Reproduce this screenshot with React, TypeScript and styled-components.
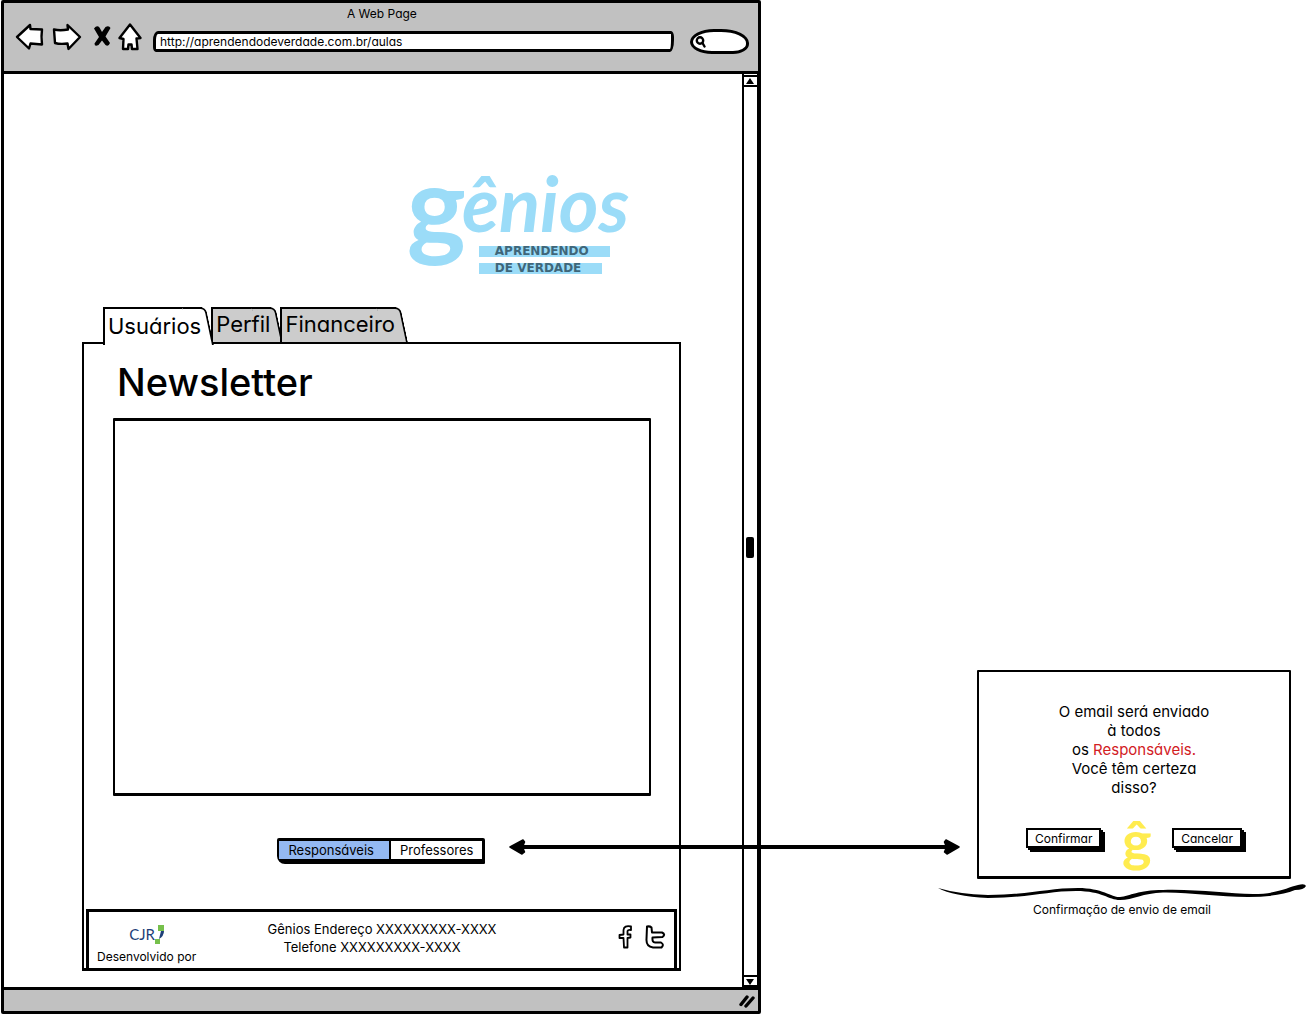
import React, { useState } from "react";
import styled, { createGlobalStyle } from "styled-components";

const ink = "#000";
const chrome = "#c1c1c1";
const sky = "#9bdcf8";
const sans = '"Inter", "Liberation Sans", sans-serif';

const GlobalStyle = createGlobalStyle`
  *, *::before, *::after { box-sizing: border-box; }
  body {
    margin: 0;
    background: #fff;
    color: ${ink};
    font-family: ${sans};
    font-size: 12px;
    line-height: 18px;
    font-feature-settings: "cv11" 1;
  }
  button, input, textarea {
    font: inherit;
    font-feature-settings: inherit;
    color: inherit;
    margin: 0;
  }
  button { cursor: pointer; }
  h1, p { margin: 0; }
`;

const Page = styled.div`
  position: relative;
  display: grid;
  grid-template-columns: minmax(0, 7fr) minmax(0, 5fr);
  align-items: start;
`;

const Browser = styled.section`
  margin: 0 1px;
  border: 3px solid ${ink};
  border-radius: 2px;
`;

const BrowserHeader = styled.header`
  background: ${chrome};
  border-bottom: 3px solid ${ink};
  padding: 2px 9px 17px 11px;
`;

const BrowserTitle = styled.div`
  text-align: center;
`;

const Toolbar = styled.div`
  display: flex;
  align-items: flex-start;
  gap: 16px;
`;

const NavButtons = styled.nav`
  display: flex;
  gap: 7px;
`;

const IconButton = styled.button`
  display: block;
  padding: 0;
  border: 0;
  background: none;
  svg { display: block; }
`;

const AddressField = styled.input`
  flex: 1;
  min-width: 0;
  height: 21px;
  margin: 8px 0 0 -5px;
  padding: 0 4px;
  border: 3px solid ${ink};
  border-radius: 5px 3px 4px 3px / 9px 6px 12px 5px;
  background: #fff;
`;

const SearchBox = styled.label`
  display: flex;
  align-items: center;
  width: 59px;
  height: 25px;
  margin-top: 6px;
  padding-left: 2px;
  border: 3px solid ${ink};
  border-radius: 24px 28px 16px 22px / 13px 14px 10px 12px;
  background: #fff;
  svg { flex: none; }
  input {
    width: 30px;
    border: 0;
    padding: 0;
    outline: 0;
    background: none;
  }
`;

const Viewport = styled.div`
  display: flex;
`;

const Content = styled.main`
  flex: 1;
  min-width: 0;
  padding: 71px 61px 16px 78px;
`;

const Scrollbar = styled.div`
  display: flex;
  flex-direction: column;
  justify-content: space-between;
  align-items: center;
  width: 16px;
  padding-top: 1px;
  border: solid ${ink};
  border-width: 0 1px 0 2px;
`;

const ScrollButton = styled.button`
  display: flex;
  align-items: center;
  justify-content: center;
  width: 100%;
  height: 12px;
  padding: 0;
  border: solid ${ink};
  border-width: 2px 0;
  background: #fff;
`;

const ScrollThumb = styled.div`
  width: 8px;
  height: 21px;
  margin-top: 32px;
  border-radius: 2px;
  background: ${ink};
`;

const StatusBar = styled.footer`
  display: flex;
  justify-content: flex-end;
  align-items: center;
  height: 24px;
  padding-right: 3px;
  border-top: 3px solid ${ink};
  background: ${chrome};
`;

const Logo = styled.div`
  width: 220px;
  margin: 0 54px 33px auto;
`;

const Wordmark = styled.div`
  display: flex;
  align-items: flex-start;
  height: 101px;
  color: ${sky};
  font-family: Lato, sans-serif;
  font-weight: 700;
`;

const Initial = styled.span`
  font-size: 112px;
  line-height: 116px;
`;

const WordRest = styled.span`
  margin-left: -4px;
  padding-top: 18px;
  font-size: 76px;
  font-style: italic;
  line-height: 80px;
`;

const Tagline = styled.div<{ $width: number }>`
  width: ${(p) => p.$width}px;
  height: 11px;
  margin: 0 0 6px 72px;
  padding-left: 16px;
  background: ${sky};
  color: #3f6679;
  font-family: "DejaVu Sans", sans-serif;
  font-size: 12px;
  font-weight: 700;
  line-height: 11px;
  white-space: nowrap;
  &:last-child { margin-bottom: 0; }
`;

const TabList = styled.div`
  position: relative;
  z-index: 1;
  display: flex;
  align-items: flex-start;
  height: 35px;
  padding-left: 21px;
`;

const Tab = styled.button<{ $active: boolean }>`
  position: relative;
  isolation: isolate;
  z-index: ${(p) => (p.$active ? 1 : 0)};
  height: ${(p) => (p.$active ? 38 : 35)}px;
  margin-right: -3px;
  padding: 0 13px 0 5px;
  border: 0;
  background: none;
  font-size: 22px;
  line-height: ${(p) => (p.$active ? 36 : 35)}px;
  white-space: nowrap;

  &::before, &::after {
    content: "";
    position: absolute;
    z-index: -1;
    top: 0;
    bottom: 0;
    border: 0 solid ${ink};
    background: ${(p) => (p.$active ? "#fff" : "#ccc")};
  }
  &::before {
    left: 0;
    right: 12px;
    border-width: 2px 0 0 2px;
  }
  &::after {
    right: 0;
    width: 24px;
    border-width: 2px 2px 0 0;
    border-top-right-radius: 6px;
    transform: skewX(12deg);
    transform-origin: bottom;
  }
`;

const Panel = styled.section`
  border: solid ${ink};
  border-width: 2px 2px 3px;
  padding: 16px 2px 0;
`;

const Heading = styled.h1`
  padding-left: 31px;
  margin-bottom: 14px;
  font-size: 38px;
  font-weight: 500;
  line-height: 44px;
`;

const MessageBox = styled.textarea`
  display: block;
  width: calc(100% - 53px);
  height: 378px;
  margin: 0 26px 42px 27px;
  padding: 8px;
  border: solid ${ink};
  border-width: 3px 2px;
  border-radius: 1px;
  background: #fff;
  resize: none;
`;

const Segmented = styled.div`
  display: flex;
  width: fit-content;
  margin: 0 auto 45px;
  border: solid ${ink};
  border-width: 3px 3px 5px 2px;
  border-radius: 2px 2px 1px 8px;
`;

const Segment = styled.button<{ $selected: boolean }>`
  height: 18px;
  padding: 0 9px;
  border: 0;
  background: ${(p) => (p.$selected ? "#94b9f2" : "#fff")};
  font-size: 13px;
  line-height: 18px;
  & + & { border-left: 2px solid ${ink}; }
  &:first-child { padding-right: 15px; }
`;

const SiteFooter = styled.footer`
  display: flex;
  align-items: flex-start;
  justify-content: space-between;
  height: 59px;
  padding: 8px 8px 0;
  border: solid ${ink};
  border-width: 3px 3px 0;
`;

const Credit = styled.div`
  text-align: center;
`;

const CompanyMark = styled.div`
  display: flex;
  justify-content: center;
  height: 28px;
  padding-top: 5px;
  color: #1e3f78;
  font-family: Lato, sans-serif;
  font-size: 15px;
`;

const Address = styled.address`
  font-size: 13px;
  font-style: normal;
  text-align: center;
  padding-right: 50px;
  div + div { padding-right: 20px; }
`;

const Social = styled.div`
  display: flex;
  gap: 12px;
  padding-top: 5px;
  a { color: ${ink}; }
  svg { display: block; }
`;

const Annotation = styled.aside`
  width: 368px;
  max-width: 100%;
  margin-left: auto;
  padding-top: 670px;
  text-align: center;
`;

const Dialog = styled.section`
  margin: 0 15px 4px 39px;
  padding: 30px 47px 11px;
  border: solid ${ink};
  border-width: 2px 2px 3px;
  border-radius: 1px;
`;

const DialogText = styled.p`
  margin-bottom: 18px;
  font-size: 15px;
  line-height: 19px;
  em {
    color: #d2201f;
    font-style: normal;
  }
`;

const DialogActions = styled.div`
  display: flex;
  align-items: flex-start;
  justify-content: space-between;
`;

const DialogButton = styled.button`
  height: 20px;
  margin-top: 13px;
  padding: 0 7px;
  border: 2px solid ${ink};
  background: #fff;
  box-shadow: 2px 2px 0 ${ink}, 4px 4px 0 ${ink};
  line-height: 17px;
`;

const Monogram = styled.div`
  color: #ffec4f;
  font-family: Lato, sans-serif;
  font-size: 56px;
  font-weight: 700;
  line-height: 50px;
`;

const Brace = styled.svg`
  display: block;
  width: 100%;
  height: 18px;
`;

const Connector = styled.div`
  position: absolute;
  top: 839px;
  left: 39%;
  right: 26.5%;
  display: flex;
  align-items: center;
  svg { flex: none; }
`;

const ConnectorLine = styled.div`
  flex: 1;
  height: 4px;
  margin: 0 -6px;
  background: ${ink};
`;

const ArrowIcon = ({ forward }: { forward?: boolean }) => (
  <svg width="30" height="28" viewBox="0 0 30 28" fill="#fff" stroke={ink} strokeWidth="2.4" strokeLinejoin="round">
    {forward ? (
      <path d="M2 6.5Q8 8 16 6.5L15.500 2L28 14L16.500 26L15.500 20.500Q8 21.500 3 20Z" />
    ) : (
      <path d="M27 6.500L15.500 6L15 2L2 14L14 25.500L15.500 20.500L27 21.500Q26 13 27 6.500Z" />
    )}
  </svg>
);

const StopIcon = () => (
  <svg width="22" height="28" viewBox="-4 0 22 28" fill={ink}>
    <path d="M1 5.500Q4 1.500 6.500 4.500L9 9L12.500 4Q16 2 17.500 5L12.500 13.500L17 20Q15.500 24 12.500 22L9 17.500L5.500 22Q1.500 24 1.500 20.500L6 14Z" />
  </svg>
);

const HomeIcon = () => (
  <svg width="24" height="28" viewBox="0 0 24 28" fill="#fff" stroke={ink} strokeWidth="2.4" strokeLinejoin="round">
    <path d="M12 1.500L1.500 15L5.500 16L5 26L10 26L10.500 21.500H13.500L14 26H19.500L18.500 15.500L22.500 15Z" />
  </svg>
);

const SearchIcon = () => (
  <svg width="11" height="12" viewBox="0 0 11 12" fill="none" stroke={ink} strokeWidth="2.4" strokeLinecap="round">
    <circle cx="5" cy="4.500" r="3.200" />
    <path d="M7.500 7L9.500 10.500" />
  </svg>
);

const Triangle = ({ down }: { down?: boolean }) => (
  <svg width="8" height="7" viewBox="0 0 8 7" fill={ink}>
    <path d={down ? "M0 1H8L4 7Z" : "M4 0L8 6H0Z"} />
  </svg>
);

const GripIcon = () => (
  <svg width="16" height="14" viewBox="0 0 16 14" fill="none" stroke={ink} strokeWidth="3.4" strokeLinecap="round">
    <path d="M2 10.500L8 3M7 12L14 4" />
  </svg>
);

const CompanyFlag = () => (
  <svg width="9" height="20" viewBox="0 0 9 20">
    <path d="M3 0H9V6H3Z" fill="#76c04b" />
    <path d="M9 6Q9 11 4 14L6 6Z" fill="#1e3f78" />
    <path d="M0 14H5V19H0Z" fill="#76c04b" />
  </svg>
);

const FacebookIcon = () => (
  <svg width="15" height="24" viewBox="0 0 15 24" fill="#fff" stroke={ink} strokeWidth="1.800" strokeLinejoin="round">
    <path d="M13 1.500Q6 0 5.500 5V9.500L1.500 10V13L5.500 13L6 22.500H9.500V13L12.500 12.500V9.500H9.500V6Q10 4.500 13 5Z" />
  </svg>
);

const TwitterIcon = () => (
  <svg width="21" height="24" viewBox="0 0 21 24" fill="#fff" stroke={ink} strokeWidth="2" strokeLinejoin="round">
    <path d="M2 1.500Q5 1 6.500 2.500L7 7.500H17Q21 9.500 17.500 12L7.500 12.500Q7 17.500 10 17.500H16Q19.500 19.500 16.500 22.500H8Q1 21.500 1.500 14Z" />
  </svg>
);

const ArrowHead = ({ left }: { left?: boolean }) => (
  <svg width="17" height="16" viewBox="0 0 17 16" fill={ink} stroke={ink} strokeWidth="1.500" strokeLinejoin="round">
    <path d={left ? "M1 8L14 1L15.500 3L13.500 8L15.500 13L13 15Z" : "M16 8L3 1L1.500 3L3.500 8L1.500 13L4 15Z"} />
  </svg>
);

const tabs = ["Usuários", "Perfil", "Financeiro"];
const audiences = ["Responsáveis", "Professores"];

export default function App() {
  const [tab, setTab] = useState(tabs[0]);
  const [audience, setAudience] = useState(audiences[0]);

  return (
    <>
      <GlobalStyle />
      <Page>
        <Browser>
          <BrowserHeader>
            <BrowserTitle>A Web Page</BrowserTitle>
            <Toolbar>
              <NavButtons>
                <IconButton aria-label="Voltar"><ArrowIcon /></IconButton>
                <IconButton aria-label="Avançar"><ArrowIcon forward /></IconButton>
                <IconButton aria-label="Parar"><StopIcon /></IconButton>
                <IconButton aria-label="Início"><HomeIcon /></IconButton>
              </NavButtons>
              <AddressField aria-label="Endereço" defaultValue="http://aprendendodeverdade.com.br/aulas" />
              <SearchBox>
                <SearchIcon />
                <input aria-label="Buscar" />
              </SearchBox>
            </Toolbar>
          </BrowserHeader>

          <Viewport>
            <Content>
              <Logo>
                <Wordmark><Initial>g</Initial><WordRest>ênios</WordRest></Wordmark>
                <Tagline $width={131}>APRENDENDO</Tagline>
                <Tagline $width={123}>DE VERDADE</Tagline>
              </Logo>

              <TabList role="tablist">
                {tabs.map((name) => (
                  <Tab key={name} role="tab" aria-selected={name === tab} $active={name === tab} onClick={() => setTab(name)}>
                    {name}
                  </Tab>
                ))}
              </TabList>

              <Panel>
                <Heading id="newsletter">Newsletter</Heading>
                <MessageBox aria-labelledby="newsletter" />
                <Segmented>
                  {audiences.map((name) => (
                    <Segment
                      key={name}
                      aria-pressed={name === audience}
                      $selected={name === audience}
                      onClick={() => setAudience(name)}
                    >
                      {name}
                    </Segment>
                  ))}
                </Segmented>
                <SiteFooter>
                  <Credit>
                    <CompanyMark>CJR<CompanyFlag /></CompanyMark>
                    Desenvolvido por
                  </Credit>
                  <Address>
                    <div>Gênios Endereço XXXXXXXXX-XXXX</div>
                    <div>Telefone XXXXXXXXX-XXXX</div>
                  </Address>
                  <Social>
                    <a href="#facebook" aria-label="Facebook"><FacebookIcon /></a>
                    <a href="#twitter" aria-label="Twitter"><TwitterIcon /></a>
                  </Social>
                </SiteFooter>
              </Panel>
            </Content>

            <Scrollbar>
              <ScrollButton aria-label="Rolar para cima"><Triangle /></ScrollButton>
              <ScrollThumb />
              <ScrollButton aria-label="Rolar para baixo"><Triangle down /></ScrollButton>
            </Scrollbar>
          </Viewport>

          <StatusBar><GripIcon /></StatusBar>
        </Browser>

        <Annotation>
          <Dialog role="dialog" aria-label="Confirmação">
            <DialogText>
              O email será enviado<br />
              à todos<br />
              os <em>Responsáveis.</em><br />
              Você têm certeza<br />
              disso?
            </DialogText>
            <DialogActions>
              <DialogButton>Confirmar</DialogButton>
              <Monogram>ĝ</Monogram>
              <DialogButton>Cancelar</DialogButton>
            </DialogActions>
          </Dialog>
          <Brace viewBox="0 0 368 18" preserveAspectRatio="none" fill={ink}>
            <path d="M0 5Q20 11 50 12C90 12 110 5 140 5C165 5 175 15 182 14C192 13 200 7 225 7C260 6 290 11 315 11C340 11 350 4 360 2Q367 0 368 3Q366 7 357 7Q340 14 310 14C280 14 250 9 225 9.500C205 10 195 17 182 17C170 17 165 8 138 8C110 8 90 15 50 15Q15 13 0 5Z" />
          </Brace>
          <p>Confirmação de envio de email</p>
        </Annotation>

        <Connector aria-hidden="true">
          <ArrowHead left />
          <ConnectorLine />
          <ArrowHead />
        </Connector>
      </Page>
    </>
  );
}
